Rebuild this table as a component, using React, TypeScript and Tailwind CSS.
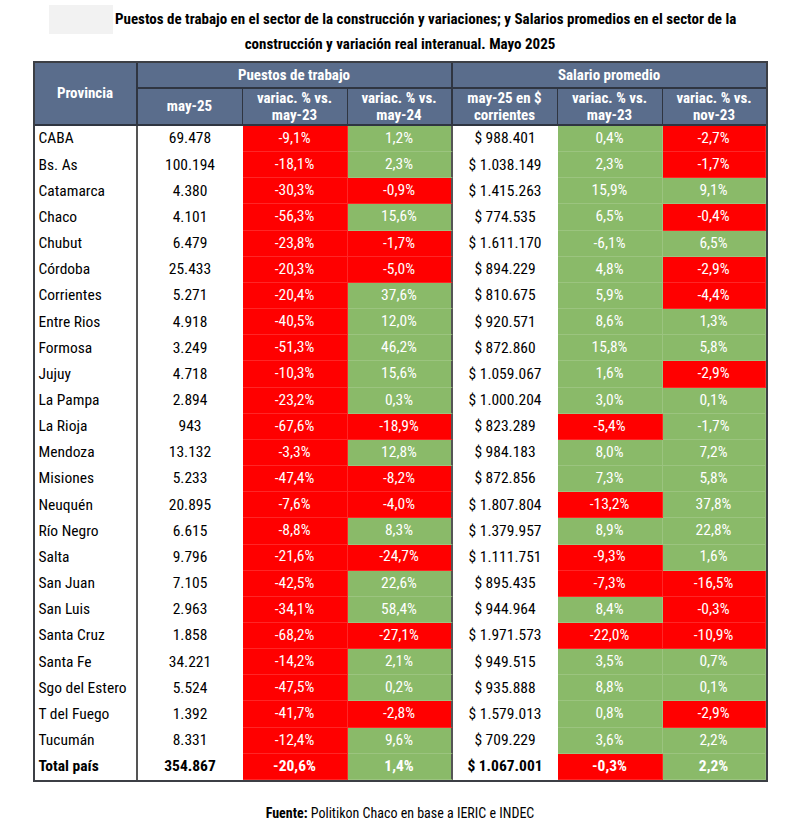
import React from "react";

type Tone = "r" | "g";
type Row = [string, string, string, Tone, string, Tone, string, string, Tone, string, Tone];

const rows: Row[] = [
  ["CABA", "69.478", "-9,1%", "r", "1,2%", "g", "$ 988.401", "0,4%", "g", "-2,7%", "r"],
  ["Bs. As", "100.194", "-18,1%", "r", "2,3%", "g", "$ 1.038.149", "2,3%", "g", "-1,7%", "r"],
  ["Catamarca", "4.380", "-30,3%", "r", "-0,9%", "r", "$ 1.415.263", "15,9%", "g", "9,1%", "g"],
  ["Chaco", "4.101", "-56,3%", "r", "15,6%", "g", "$ 774.535", "6,5%", "g", "-0,4%", "r"],
  ["Chubut", "6.479", "-23,8%", "r", "-1,7%", "r", "$ 1.611.170", "-6,1%", "g", "6,5%", "g"],
  ["Córdoba", "25.433", "-20,3%", "r", "-5,0%", "r", "$ 894.229", "4,8%", "g", "-2,9%", "r"],
  ["Corrientes", "5.271", "-20,4%", "r", "37,6%", "g", "$ 810.675", "5,9%", "g", "-4,4%", "r"],
  ["Entre Rios", "4.918", "-40,5%", "r", "12,0%", "g", "$ 920.571", "8,6%", "g", "1,3%", "g"],
  ["Formosa", "3.249", "-51,3%", "r", "46,2%", "g", "$ 872.860", "15,8%", "g", "5,8%", "g"],
  ["Jujuy", "4.718", "-10,3%", "r", "15,6%", "g", "$ 1.059.067", "1,6%", "g", "-2,9%", "r"],
  ["La Pampa", "2.894", "-23,2%", "r", "0,3%", "g", "$ 1.000.204", "3,0%", "g", "0,1%", "g"],
  ["La Rioja", "943", "-67,6%", "r", "-18,9%", "r", "$ 823.289", "-5,4%", "r", "-1,7%", "g"],
  ["Mendoza", "13.132", "-3,3%", "r", "12,8%", "g", "$ 984.183", "8,0%", "g", "7,2%", "g"],
  ["Misiones", "5.233", "-47,4%", "r", "-8,2%", "r", "$ 872.856", "7,3%", "g", "5,8%", "g"],
  ["Neuquén", "20.895", "-7,6%", "r", "-4,0%", "r", "$ 1.807.804", "-13,2%", "r", "37,8%", "g"],
  ["Río Negro", "6.615", "-8,8%", "r", "8,3%", "g", "$ 1.379.957", "8,9%", "g", "22,8%", "g"],
  ["Salta", "9.796", "-21,6%", "r", "-24,7%", "r", "$ 1.111.751", "-9,3%", "r", "1,6%", "g"],
  ["San Juan", "7.105", "-42,5%", "r", "22,6%", "g", "$ 895.435", "-7,3%", "r", "-16,5%", "r"],
  ["San Luis", "2.963", "-34,1%", "r", "58,4%", "g", "$ 944.964", "8,4%", "g", "-0,3%", "r"],
  ["Santa Cruz", "1.858", "-68,2%", "r", "-27,1%", "r", "$ 1.971.573", "-22,0%", "r", "-10,9%", "r"],
  ["Santa Fe", "34.221", "-14,2%", "r", "2,1%", "g", "$ 949.515", "3,5%", "g", "0,7%", "g"],
  ["Sgo del Estero", "5.524", "-47,5%", "r", "0,2%", "g", "$ 935.888", "8,8%", "g", "0,1%", "g"],
  ["T del Fuego", "1.392", "-41,7%", "r", "-2,8%", "r", "$ 1.579.013", "0,8%", "g", "-2,9%", "r"],
  ["Tucumán", "8.331", "-12,4%", "r", "9,6%", "g", "$ 709.229", "3,6%", "g", "2,2%", "g"],
  ["Total país", "354.867", "-20,6%", "r", "1,4%", "g", "$ 1.067.001", "-0,3%", "r", "2,2%", "g"],
];

const grid = "grid grid-cols-[103px_105px_105px_105px_105px_105px_103px]";

function Tinted({ value, tone, divider }: { value: string; tone: Tone; divider?: boolean }) {
  return (
    <div
      className={`flex items-center justify-center border-b border-white/15 text-white ${
        tone === "r" ? "bg-[#ff0000]" : "bg-[#8aba69]"
      } ${divider ? "border-r-2 border-r-[#555555]" : "border-r border-r-white/15"}`}
    >
      {value}
    </div>
  );
}

function SubHead({ top, bottom, last }: { top: string; bottom?: string; last?: "group" | "end" }) {
  return (
    <div
      className={`flex h-[37px] flex-col items-center justify-center border-b-2 border-[#2f3541] leading-[17px] ${
        last === "group" ? "border-r-2" : last === "end" ? "" : "border-r"
      }`}
    >
      <span>{top}</span>
      {bottom && <span>{bottom}</span>}
    </div>
  );
}

export default function App() {
  return (
    <div className="h-[836px] w-[800px] bg-white font-['Roboto_Condensed','Liberation_Sans_Narrow','Arial_Narrow',Lato,sans-serif] text-black">
      <div className="whitespace-nowrap pt-[7px] text-[15px] font-bold">
        <div className="ml-[49px] flex h-[25px] items-center gap-[2px]">
          <div className="h-[29px] w-[64px] shrink-0 bg-[#f2f2f2]" />
          <span>
            Puestos de trabajo en el sector de la construcción y variaciones; y Salarios promedios en el sector de la
          </span>
        </div>
        <div className="flex h-[25px] items-center justify-center">
          construcción y variación real interanual. Mayo 2025
        </div>
      </div>

      <div className="mx-auto mt-[4px] w-[735px] border-2 border-[#3c3f45]">
        <div className={`${grid} whitespace-nowrap bg-[#5a6d8c] text-[15px] font-bold text-white`}>
          <div className="row-span-2 flex items-center justify-center border-r-2 border-b-2 border-[#2f3541]">
            Provincia
          </div>
          <div className="col-span-3 flex h-[26px] items-center justify-center border-r-2 border-b-2 border-[#2f3541]">
            Puestos de trabajo
          </div>
          <div className="col-span-3 flex h-[26px] items-center justify-center border-b-2 border-[#2f3541]">
            Salario promedio
          </div>
          <SubHead top="may-25" />
          <SubHead top="variac. % vs." bottom="may-23" />
          <SubHead top="variac. % vs." bottom="may-24" last="group" />
          <SubHead top="may-25 en $" bottom="corrientes" />
          <SubHead top="variac. % vs." bottom="may-23" />
          <SubHead top="variac. % vs." bottom="nov-23" last="end" />
        </div>

        {rows.map((r) => {
          const total = r[0] === "Total país";
          return (
            <div
              key={r[0]}
              className={`${grid} h-[26.16px] whitespace-nowrap text-[15.5px] ${total ? "font-bold" : ""}`}
            >
              <div className="flex items-center border-r-2 border-[#555555] pl-[4px]">{r[0]}</div>
              <div className="flex items-center justify-center">{r[1]}</div>
              <Tinted value={r[2]} tone={r[3]} />
              <Tinted value={r[4]} tone={r[5]} divider />
              <div className="flex items-center justify-center">{r[6]}</div>
              <Tinted value={r[7]} tone={r[8]} />
              <Tinted value={r[9]} tone={r[10]} />
            </div>
          );
        })}
      </div>

      <p className="mt-[21px] text-center text-[14px]">
        <span className="font-bold">Fuente:</span> Politikon Chaco en base a IERIC e INDEC
      </p>
    </div>
  );
}
